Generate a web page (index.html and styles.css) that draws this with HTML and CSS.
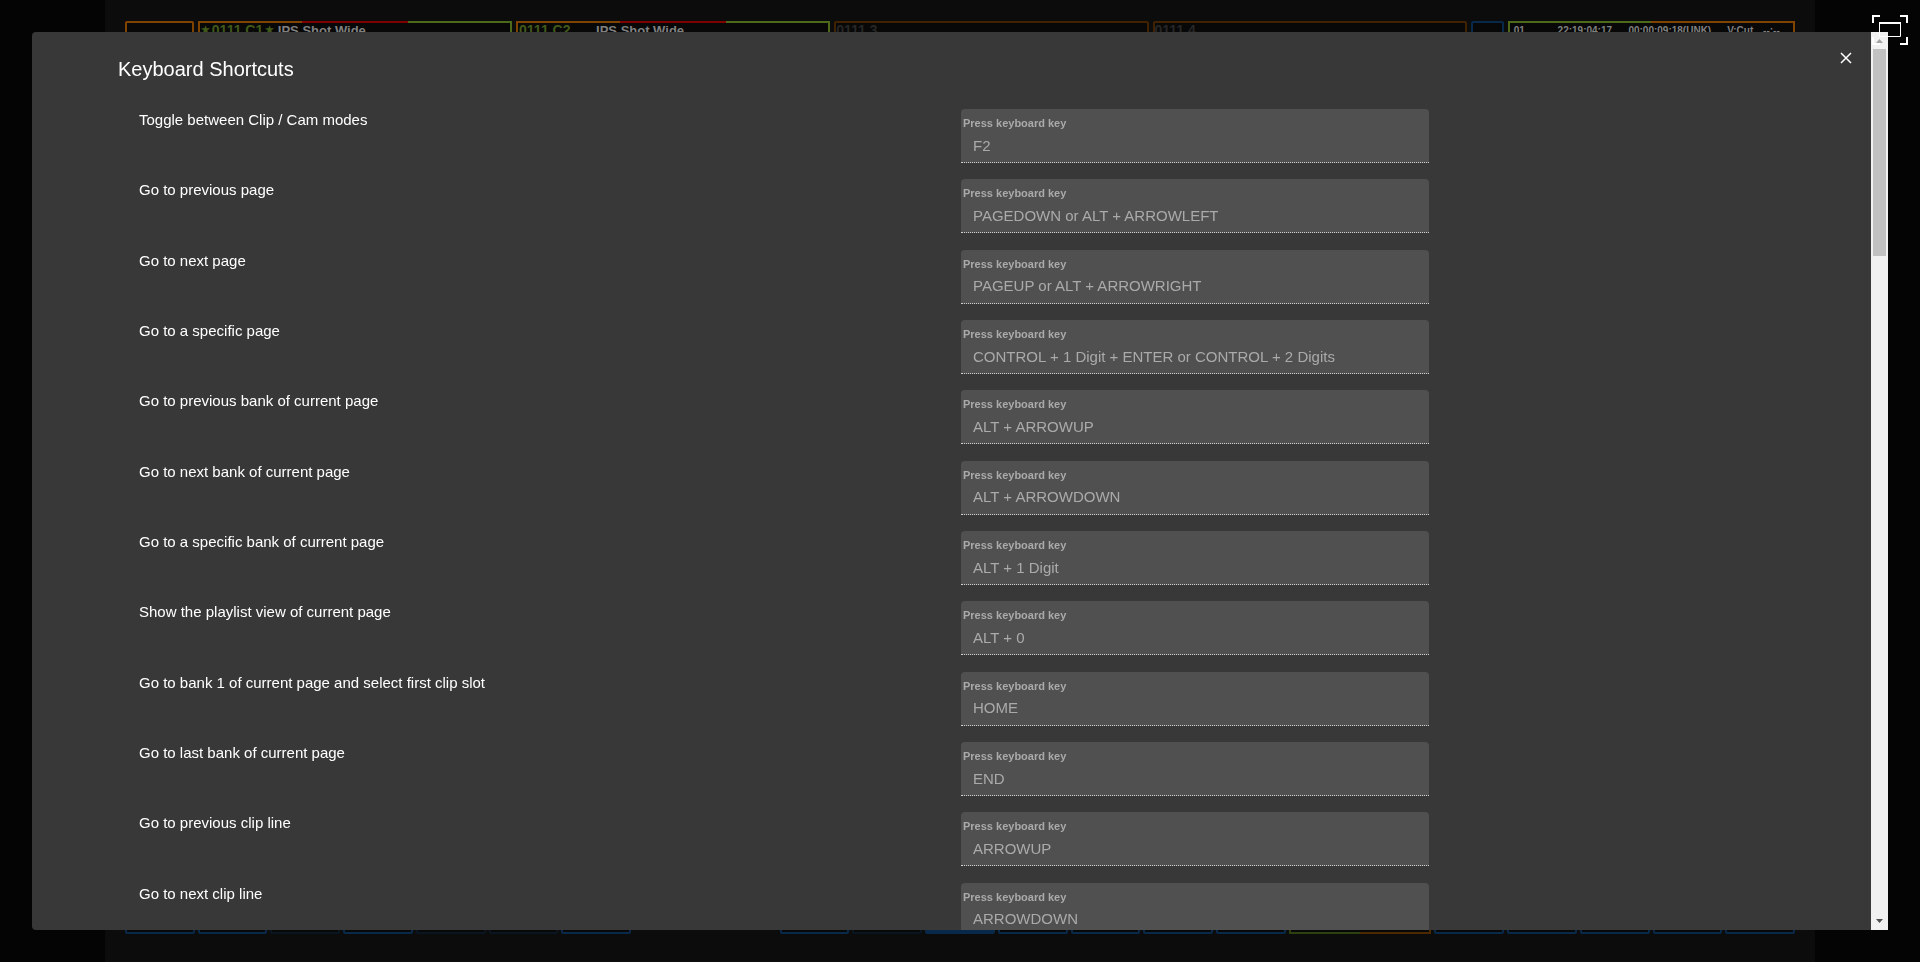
FILE: index.html
```html
<!DOCTYPE html>
<html lang="en">
<head>
<meta charset="utf-8">
<title>Keyboard Shortcuts</title>
<link rel="stylesheet" href="styles.css">
</head>
<body>
<div class="app" aria-hidden="true">
  <div class="top-row">
    <div class="cell orange"></div>
    <div class="cell live"><span class="clip-id starred"><i class="star">★</i>0111 C1<i class="star">★</i></span><span class="clip-name">IPS Shot Wide</span></div>
    <div class="cell live"><span class="clip-id">0111 C2</span><span class="clip-name">IPS Shot Wide</span></div>
    <div class="cell orange-dim">0111 3</div>
    <div class="cell orange-dim">0111 4</div>
    <div class="cell blue"></div>
    <div class="cell info"><span>01</span><span>22:19:04:17</span><span>00:00:09:18(UNK)</span><span>V:Cut</span><span>--:--</span></div>
  </div>
  <div class="bottom-row">
    <div class="cell blue"></div><div class="cell blue"></div><div class="cell blue-dim"></div><div class="cell blue"></div><div class="cell blue-dim"></div><div class="cell blue-dim"></div><div class="cell blue"></div>
    <div class="spacer"></div>
    <div class="cell blue"></div><div class="cell blue-dim"></div><div class="cell blue active"></div><div class="cell blue"></div><div class="cell blue"></div><div class="cell blue"></div><div class="cell blue"></div>
    <div class="cell transition"></div>
    <div class="cell blue"></div><div class="cell blue"></div><div class="cell blue"></div><div class="cell blue"></div><div class="cell blue"></div>
  </div>
</div>

<div class="dialog" role="dialog" aria-modal="true" aria-labelledby="dialog-title">
  <div class="dialog-body">
    <header class="dialog-header">
      <h1 class="dialog-title" id="dialog-title">Keyboard Shortcuts</h1>
      <button class="close" type="button" aria-label="Close">
        <svg width="12" height="12" viewBox="0 0 12 12"><path d="M1 1L11 11M11 1L1 11" stroke="#fff" stroke-width="1.500"/></svg>
      </button>
    </header>
    <div class="shortcuts">
      <div class="shortcut"><label class="name" for="k1">Toggle between Clip / Cam modes</label><div class="field"><span class="hint">Press keyboard key</span><input class="key" id="k1" value="F2" readonly></div></div>
      <div class="shortcut"><label class="name" for="k2">Go to previous page</label><div class="field"><span class="hint">Press keyboard key</span><input class="key" id="k2" value="PAGEDOWN or ALT + ARROWLEFT" readonly></div></div>
      <div class="shortcut"><label class="name" for="k3">Go to next page</label><div class="field"><span class="hint">Press keyboard key</span><input class="key" id="k3" value="PAGEUP or ALT + ARROWRIGHT" readonly></div></div>
      <div class="shortcut"><label class="name" for="k4">Go to a specific page</label><div class="field"><span class="hint">Press keyboard key</span><input class="key" id="k4" value="CONTROL + 1 Digit + ENTER or CONTROL + 2 Digits" readonly></div></div>
      <div class="shortcut"><label class="name" for="k5">Go to previous bank of current page</label><div class="field"><span class="hint">Press keyboard key</span><input class="key" id="k5" value="ALT + ARROWUP" readonly></div></div>
      <div class="shortcut"><label class="name" for="k6">Go to next bank of current page</label><div class="field"><span class="hint">Press keyboard key</span><input class="key" id="k6" value="ALT + ARROWDOWN" readonly></div></div>
      <div class="shortcut"><label class="name" for="k7">Go to a specific bank of current page</label><div class="field"><span class="hint">Press keyboard key</span><input class="key" id="k7" value="ALT + 1 Digit" readonly></div></div>
      <div class="shortcut"><label class="name" for="k8">Show the playlist view of current page</label><div class="field"><span class="hint">Press keyboard key</span><input class="key" id="k8" value="ALT + 0" readonly></div></div>
      <div class="shortcut"><label class="name" for="k9">Go to bank 1 of current page and select first clip slot</label><div class="field"><span class="hint">Press keyboard key</span><input class="key" id="k9" value="HOME" readonly></div></div>
      <div class="shortcut"><label class="name" for="k10">Go to last bank of current page</label><div class="field"><span class="hint">Press keyboard key</span><input class="key" id="k10" value="END" readonly></div></div>
      <div class="shortcut"><label class="name" for="k11">Go to previous clip line</label><div class="field"><span class="hint">Press keyboard key</span><input class="key" id="k11" value="ARROWUP" readonly></div></div>
      <div class="shortcut"><label class="name" for="k12">Go to next clip line</label><div class="field"><span class="hint">Press keyboard key</span><input class="key" id="k12" value="ARROWDOWN" readonly></div></div>
    </div>
  </div>
  <div class="scrollbar" aria-hidden="true">
    <svg class="arrow" width="17" height="17" viewBox="0 0 17 17"><path d="M5 11L8.500 7L12 11Z" fill="#a3a3a3"/></svg>
    <div class="track"><div class="thumb"></div></div>
    <svg class="arrow" width="17" height="17" viewBox="0 0 17 17"><path d="M5 6L8.500 10L12 6Z" fill="#505050"/></svg>
  </div>
</div>

<button class="fullscreen" type="button" aria-label="Full screen">
  <svg width="36" height="30" viewBox="0 0 36 30" fill="none" stroke="#fff" stroke-width="2"><path d="M1 8V1H8M28 1H35V8M35 22V29H28M8 29H1V22"/><path d="M7 8H29"/><path d="M7.500 8V21.500H28.500V8" stroke-width="1"/></svg>
</button>
</body>
</html>
```
FILE: styles.css
```css
* { box-sizing: border-box; }

body {
  margin: 0;
  height: 100vh;
  overflow: hidden;
  background: #040404;
  color: #fff;
  font-family: "Liberation Sans", Arial, sans-serif;
}

.app {
  display: flex;
  flex-direction: column;
  justify-content: space-between;
  height: 100vh;
  margin: 0 105px;
  padding: 21px 20px 28px;
  background: #0c0c0c;
}

.top-row {
  display: grid;
  grid-template-columns: 69fr repeat(4, 315fr) 33fr 288fr;
  gap: 4px;
}

.bottom-row {
  display: grid;
  grid-template-columns: repeat(23, 1fr);
  gap: 3px;
}

.cell {
  height: 44px;
  border: 2px solid;
  border-radius: 2px;
  background: #080808;
  font-size: 14px;
  font-weight: bold;
  line-height: 14px;
  white-space: nowrap;
}

.orange { border-color: #804400; }
.orange-dim { border-color: #402200; color: #262626; }
.blue { border-color: #09294a; }
.blue-dim { border-color: #091621; }
.active { background: #09294a; }
.spacer { grid-column: span 2; }

.live {
  display: flex;
  border-image: linear-gradient(to right, #804400 33%, #800000 33% 67%, #4c6a1a 67%) 2;
  color: #808080;
}

.clip-id {
  display: flex;
  gap: 2px;
  width: 78px;
  padding-left: 1px;
  color: #41591a;
}

.star { font-size: 10px; font-style: normal; }
.clip-name { padding-top: 1px; font-size: 13px; }

.info {
  display: grid;
  grid-template-columns: 44fr 71fr 99fr 36fr 30fr;
  padding: 1px 0 0 4px;
  border-image: linear-gradient(to right, #4c6a1a 50%, #804400 50%) 2;
  color: #808080;
  font-size: 10px;
}

.transition {
  grid-column: span 2;
  border-image: linear-gradient(to right, #2e4010 50%, #4d2900 50%) 2;
}

.dialog {
  position: fixed;
  inset: 32px;
  display: flex;
  overflow: hidden;
  border-radius: 4px 0 0 4px;
  background: #383838;
}

.dialog-body {
  flex: 1;
  overflow: hidden;
}

.dialog-header {
  display: flex;
  justify-content: space-between;
  align-items: flex-start;
  height: 77px;
  padding: 16px 15px 0 86px;
}

.dialog-title {
  margin: 9px 0 0;
  font-size: 20px;
  font-weight: normal;
  line-height: 24px;
}

.close {
  display: flex;
  padding: 4px;
  border: 0;
  background: none;
}

.shortcuts {
  display: grid;
  grid-template-rows: repeat(12, 1fr);
  height: 844px;
  padding: 0 85px 0 107px;
}

.shortcut {
  display: grid;
  grid-template-columns: 822fr 468fr 357fr;
}

.name {
  font-size: 15px;
  line-height: 22px;
}

.field {
  display: flex;
  flex-direction: column;
  height: 54px;
  padding: 7px 2px 0;
  border-bottom: 1px dotted #d0d0d0;
  border-radius: 4px 4px 0 0;
  background: #505050;
  color: #aaa;
}

.hint {
  font-size: 11px;
  font-weight: bold;
  line-height: 14px;
}

.key {
  height: 30px;
  padding: 0 10px;
  border: 0;
  outline: 0;
  background: none;
  color: #aaa;
  font: 15px "Liberation Sans", Arial, sans-serif;
}

.scrollbar {
  display: flex;
  flex-direction: column;
  width: 17px;
  background: #f1f1f1;
}

.arrow { display: block; }

.track {
  flex: 1;
  padding: 0 2px;
}

.thumb {
  height: 24%;
  background: #c1c1c1;
}

.fullscreen {
  position: fixed;
  top: 15px;
  right: 12px;
  display: flex;
  padding: 0;
  border: 0;
  background: none;
}
```
